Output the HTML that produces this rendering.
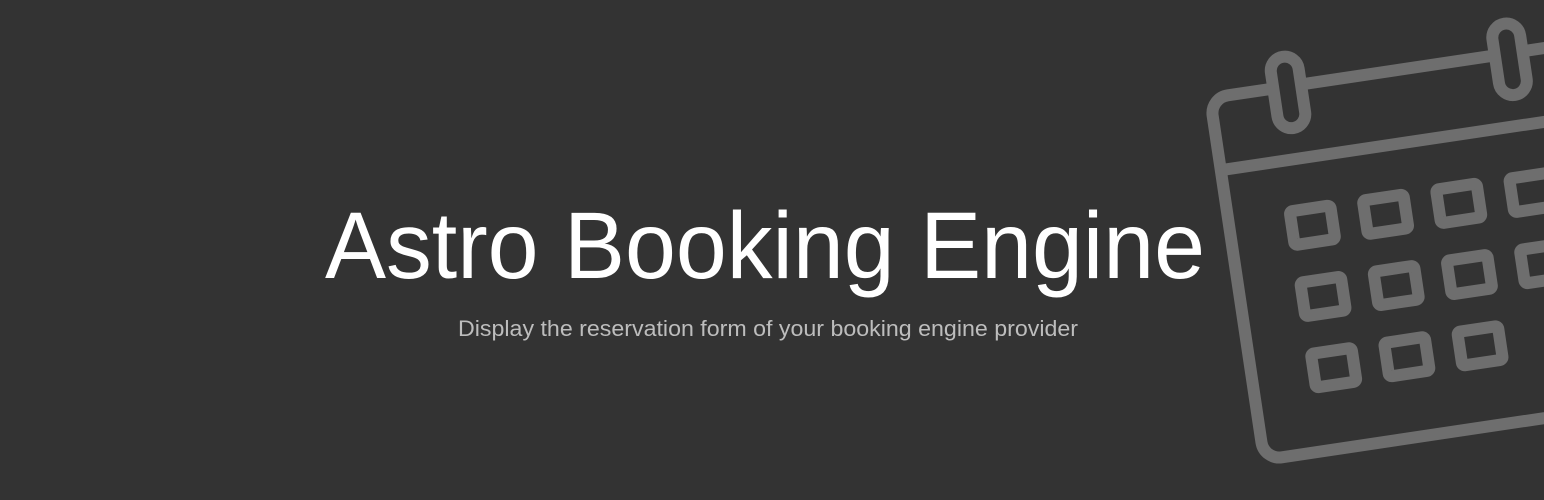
<!DOCTYPE html>
<html><head><style>
html,body{margin:0;padding:0;background:#333333;width:1544px;height:500px;overflow:hidden}
</style></head><body>
<svg width="1544" height="500" viewBox="0 0 1544 500" xmlns="http://www.w3.org/2000/svg">
<rect width="1544" height="500" fill="#333333"/>
<g transform="translate(1210,98) rotate(-8.5)" fill="none" stroke="#6e6e6e" stroke-width="12" stroke-linejoin="round">
  <rect x="0" y="0" width="420" height="366" rx="18"/>
  <line x1="0" y1="73" x2="420" y2="73"/>
  <rect x="64" y="-30" width="28" height="72" rx="14" fill="#333333"/>
  <rect x="288" y="-30" width="28" height="72" rx="14" fill="#333333"/>
  <g stroke-width="12">
    <rect x="62" y="124" width="41" height="34" rx="3"/>
    <rect x="136" y="124" width="41" height="34" rx="3"/>
    <rect x="210" y="124" width="41" height="34" rx="3"/>
    <rect x="284" y="124" width="41" height="34" rx="3"/>
    <rect x="62" y="196" width="41" height="34" rx="3"/>
    <rect x="136" y="196" width="41" height="34" rx="3"/>
    <rect x="210" y="196" width="41" height="34" rx="3"/>
    <rect x="284" y="196" width="41" height="34" rx="3"/>
    <rect x="62" y="268" width="41" height="34" rx="3"/>
    <rect x="136" y="268" width="41" height="34" rx="3"/>
    <rect x="210" y="268" width="41" height="34" rx="3"/>
  </g>
</g>
<text x="325" y="278" font-family="Liberation Sans, sans-serif" font-size="95" fill="#ffffff" textLength="880" lengthAdjust="spacingAndGlyphs">Astro Booking Engine</text>
<text x="458" y="336" font-family="Liberation Sans, sans-serif" font-size="22" fill="#bdbdbd" textLength="620" lengthAdjust="spacingAndGlyphs">Display the reservation form of your booking engine provider</text>
</svg>
</body></html>
